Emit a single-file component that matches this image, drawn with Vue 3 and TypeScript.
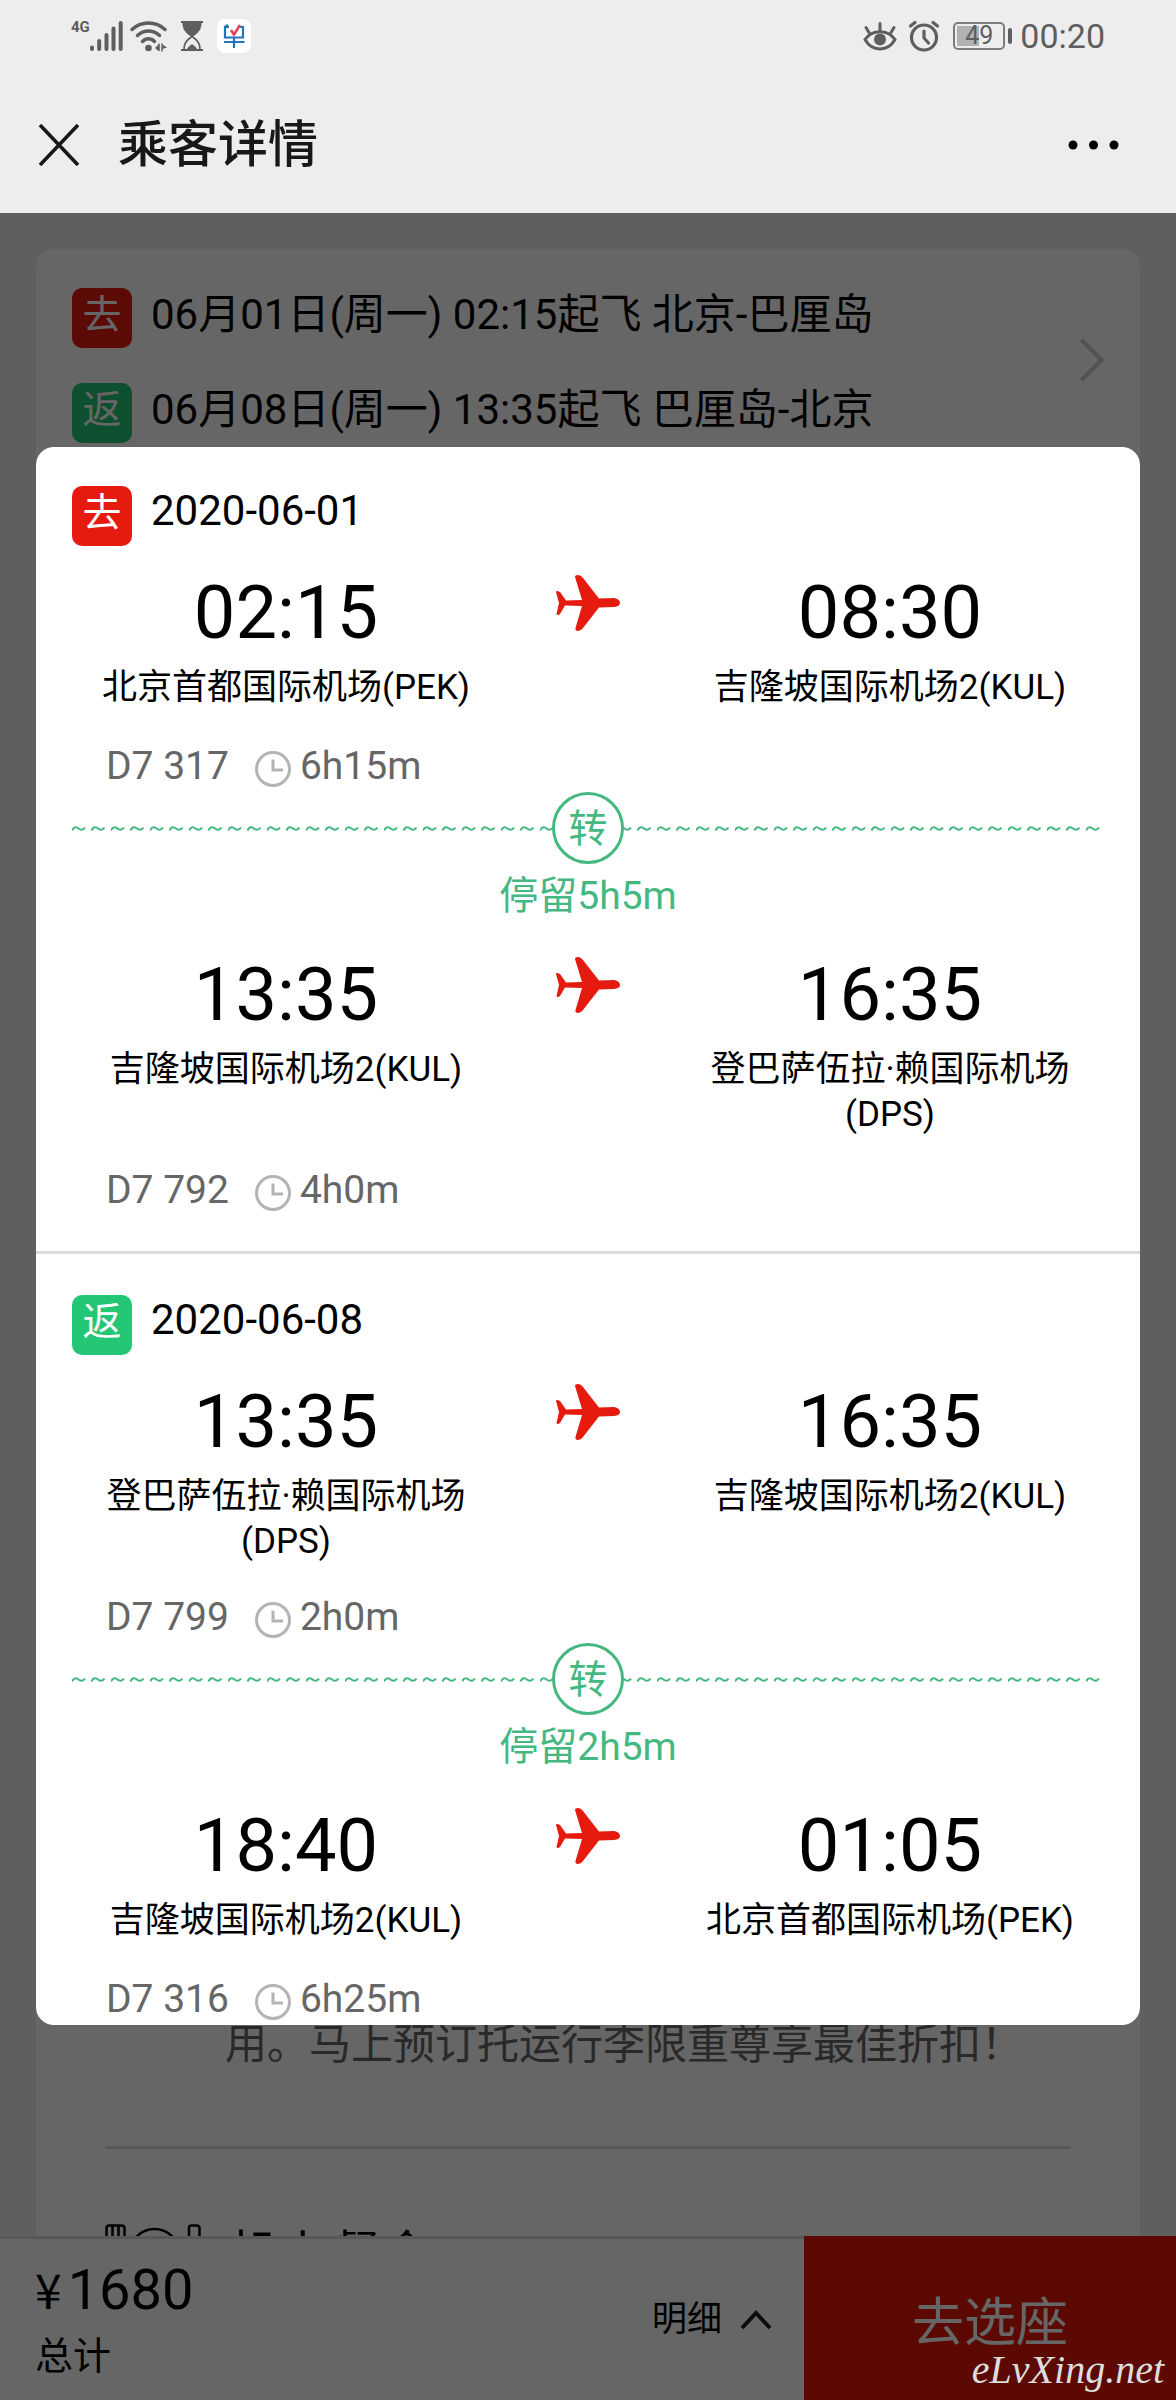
<script setup lang="ts">
interface Place {
  time: string
  airport: string
}

interface Leg {
  from: Place
  to: Place
  flight: string
  duration: string
  stopover?: string
}

interface Trip {
  kind: 'out' | 'back'
  label: string
  date: string
  summary: string
  legs: Leg[]
}

const trips: Trip[] = [
  {
    kind: 'out',
    label: '去',
    date: '2020-06-01',
    summary: '06月01日(周一) 02:15起飞 北京-巴厘岛',
    legs: [
      {
        from: { time: '02:15', airport: '北京首都国际机场(PEK)' },
        to: { time: '08:30', airport: '吉隆坡国际机场2(KUL)' },
        flight: 'D7 317',
        duration: '6h15m',
        stopover: '停留5h5m',
      },
      {
        from: { time: '13:35', airport: '吉隆坡国际机场2(KUL)' },
        to: { time: '16:35', airport: '登巴萨伍拉·赖国际机场(DPS)' },
        flight: 'D7 792',
        duration: '4h0m',
      },
    ],
  },
  {
    kind: 'back',
    label: '返',
    date: '2020-06-08',
    summary: '06月08日(周一) 13:35起飞 巴厘岛-北京',
    legs: [
      {
        from: { time: '13:35', airport: '登巴萨伍拉·赖国际机场(DPS)' },
        to: { time: '16:35', airport: '吉隆坡国际机场2(KUL)' },
        flight: 'D7 799',
        duration: '2h0m',
        stopover: '停留2h5m',
      },
      {
        from: { time: '18:40', airport: '吉隆坡国际机场2(KUL)' },
        to: { time: '01:05', airport: '北京首都国际机场(PEK)' },
        flight: 'D7 316',
        duration: '6h25m',
      },
    ],
  },
]
</script>

<template>
  <div class="app" lang="zh-CN">
    <header class="top">
      <div class="status">
        <div class="status-left">
          <span class="network">4G</span>
          <svg class="signal" width="34" height="32" viewBox="0 0 34 32" aria-hidden="true">
            <g stroke="#5e5e5e" stroke-width="4" stroke-linecap="round">
              <path d="M2 27.500V29M9.200 21V29M16.500 15V29M23.500 8.500V29M30.700 3V29" />
            </g>
          </svg>
          <svg class="wifi" width="38" height="32" viewBox="0 0 38 32" aria-hidden="true">
            <g fill="none" stroke="#5e5e5e" stroke-width="3.400" stroke-linecap="round">
              <path d="M2 9.500C11 .8 26 .8 35 9.500M7.500 15.500C14 9.500 23 9.500 29.500 15.500M12.500 21.500C16 17.800 21 17.800 24.500 21.500" />
            </g>
            <circle cx="18.500" cy="28" r="3.300" fill="#5e5e5e" />
            <path d="M29 24V31.500L25 28ZM32 23.500V31.500M32.500 24.500L37 27.500L32.500 29Z" fill="#5e5e5e" />
            <path d="M29 23.500V31M32 23.500V31.500" stroke="#5e5e5e" stroke-width="1.500" />
          </svg>
          <svg class="glass" width="24" height="32" viewBox="0 0 24 32" aria-hidden="true">
            <path d="M1 1H23V3H21.500C21.500 10 18 13 13 16.500H11C6 13 2.500 10 2.500 3H1ZM1 29H23V31H1Z" fill="#5e5e5e" />
            <path d="M4 29C4 22 8 19 12 16.500C16 19 20 22 20 29" fill="none" stroke="#5e5e5e" stroke-width="1.800" />
            <path d="M7 29C8 26.500 10 26 12 24C14 26 16 26.500 17 29Z" fill="#5e5e5e" />
          </svg>
          <svg class="badge-app" width="34" height="34" viewBox="0 0 34 34" aria-hidden="true">
            <rect width="34" height="34" rx="8" fill="#fff" />
            <path d="M12 8H8V18.500H26V8H23M8 8L11 6M7 23H27.500M17 18.500V29" fill="none" stroke="#2273b9" stroke-width="2.200" />
            <path d="M14 11L17 15.500L23 6" fill="none" stroke="#e0435c" stroke-width="2.600" />
          </svg>
        </div>
        <div class="status-right">
          <svg width="34" height="32" viewBox="0 0 34 32" aria-hidden="true">
            <g fill="none" stroke="#5e5e5e" stroke-width="3" stroke-linecap="round">
              <path d="M2 19.500C9 9 25 9 32 19.500C25 32 9 32 2 19.500ZM17 10V3.500M6 12.500L3 7.500M28 12.500L31 7.500" />
            </g>
            <circle cx="17" cy="19.500" r="6" fill="#5e5e5e" />
          </svg>
          <svg class="alarm" width="32" height="32" viewBox="0 0 32 32" aria-hidden="true">
            <g fill="none" stroke="#5e5e5e" stroke-width="3.200" stroke-linecap="round">
              <circle cx="16" cy="17.500" r="12.500" />
              <path d="M16 11V18L20.500 23M2.500 6L7 2.500M29.500 6L25 2.500" />
            </g>
          </svg>
          <span class="battery"><span class="cell">49</span></span>
          <time class="clock-text">00:20</time>
        </div>
      </div>
      <div class="nav">
        <button class="icon-btn" type="button" aria-label="关闭">
          <svg width="42" height="42" viewBox="0 0 42 42">
            <path d="M2 1L40 41M40 1L2 41" stroke="#181818" stroke-width="3.600" />
          </svg>
        </button>
        <h1>乘客详情</h1>
        <button class="icon-btn more" type="button" aria-label="更多">
          <svg width="52" height="12" viewBox="0 0 52 12">
            <circle cx="6" cy="6" r="4.500" /><circle cx="26.500" cy="6" r="4.500" /><circle cx="47" cy="6" r="4.500" />
          </svg>
        </button>
      </div>
    </header>

    <div class="stage">
      <div class="page">
        <main class="card">
          <section class="summary">
            <ul>
              <li v-for="trip in trips" :key="trip.kind">
                <span class="tag" :class="trip.kind">{{ trip.label }}</span>
                <span class="summary-text">{{ trip.summary }}</span>
              </li>
            </ul>
            <svg class="arrow" width="26" height="44" viewBox="0 0 26 44" aria-hidden="true">
              <path d="M3.500 2L23.500 22L3.500 42" fill="none" stroke="#ccc" stroke-width="4" />
            </svg>
          </section>
          <section class="extras">
            <p>用。马上预订托运行李限重尊享最佳折扣！</p>
            <hr />
            <div class="meal">
              <svg width="96" height="60" viewBox="0 0 96 60" aria-hidden="true">
                <g fill="none" stroke="#000" stroke-width="2.500">
                  <path d="M1.500 20V4Q1.500 1.500 4 1.500H16Q19.500 1.500 19.500 4V20M7.500 2V16M13.500 2V16" />
                  <circle cx="49.500" cy="30" r="25" />
                  <path d="M84 58V4Q84 1.500 86.500 1.500H91Q94.500 1.500 94.500 4V58" />
                </g>
              </svg>
              <h2>机上餐食</h2>
            </div>
          </section>
        </main>
        <footer class="bar">
          <div class="total">
            <p class="price"><span class="yen">¥</span>1680</p>
            <p class="total-label">总计</p>
          </div>
          <button class="detail" type="button">
            明细
            <svg width="32" height="20" viewBox="0 0 32 20" aria-hidden="true">
              <path d="M2 18L16 3L30 18" fill="none" stroke="#222" stroke-width="4" />
            </svg>
          </button>
          <button class="next" type="button">去选座</button>
        </footer>
      </div>

      <div class="overlay">
        <svg class="defs" width="0" height="0" aria-hidden="true">
          <defs>
            <pattern id="wave" width="39" height="8" patternUnits="userSpaceOnUse">
              <path
                d="M0 6.500C2 2 5 3 6.500 4.500S11 6.500 13 3.500M19.500 6.500C21.500 2 24.500 3 26 4.500S30.500 6.500 32.500 3.500"
                fill="none"
                stroke="#45b881"
                stroke-width="2"
              />
            </pattern>
          </defs>
        </svg>
        <div class="dialog" role="dialog" aria-modal="true" aria-label="航班详情">
          <section v-for="trip in trips" :key="trip.kind" class="trip" :class="trip.kind + '-trip'">
            <div class="trip-head">
              <span class="tag" :class="trip.kind">{{ trip.label }}</span>
              <time class="date">{{ trip.date }}</time>
            </div>
            <div v-for="leg in trip.legs" :key="leg.flight" class="leg">
              <div class="route">
                <div class="place">
                  <time class="time">{{ leg.from.time }}</time>
                  <span class="airport">{{ leg.from.airport }}</span>
                </div>
                <svg class="plane" width="64" height="56" viewBox="0 0 64 56" aria-hidden="true">
                  <path
                    d="M19 2Q19 0 22 0Q25 0 27 3L43 23.500L58 23Q64 24 64 28Q64 31.500 58 32L43 32.500L27 53Q25 56 22 56Q19 56 19.500 53L26 31L9 30.500L4 39Q1 41 .5 39L3 28L0 17Q0 15 4 17L10 25.500L26 25Z"
                    fill="#e61b10"
                  />
                </svg>
                <div class="place">
                  <time class="time">{{ leg.to.time }}</time>
                  <span class="airport">{{ leg.to.airport }}</span>
                </div>
              </div>
              <div class="flight">
                <span>{{ leg.flight }}</span>
                <svg class="clock" width="36" height="36" viewBox="0 0 36 36" aria-hidden="true">
                  <circle cx="18" cy="18" r="16.500" fill="none" stroke="#b4b4b4" stroke-width="3" />
                  <path d="M18 8.500V19H28" fill="none" stroke="#b4b4b4" stroke-width="3" />
                </svg>
                <span>{{ leg.duration }}</span>
              </div>
              <div v-if="leg.stopover" class="transfer">
                <div class="transfer-line">
                  <svg class="wave" width="100%" height="8" aria-hidden="true">
                    <rect width="100%" height="8" fill="url(#wave)" />
                  </svg>
                  <span class="ring">转</span>
                </div>
                <p class="stay">{{ leg.stopover }}</p>
              </div>
            </div>
          </section>
        </div>
      </div>

      <span class="watermark">eLvXing.net</span>
    </div>
  </div>
</template>

<style>
body {
  margin: 0;
  background: #eee;
}
</style>

<style scoped>
.app {
  display: flex;
  flex-direction: column;
  min-height: 100vh;
  font-family: Roboto, "Noto Sans CJK SC", sans-serif;
  color: #000;
}

h1,
h2,
p,
ul {
  margin: 0;
  padding: 0;
  font-weight: 400;
}

svg {
  display: block;
  flex: none;
}

button {
  padding: 0;
  border: 0;
  background: none;
  font: inherit;
  color: inherit;
}

/* Status and title bars */
.top {
  background: #ededed;
}

.status {
  display: flex;
  justify-content: space-between;
  align-items: center;
  height: 72px;
  padding: 0 71px;
  color: #5e5e5e;
}

.status-left,
.status-right {
  display: flex;
  align-items: center;
}

.network {
  align-self: flex-start;
  font-size: 15px;
  line-height: 16px;
  font-weight: 700;
}

.wifi {
  margin-left: 6px;
}

.glass {
  margin-left: 12px;
}

.badge-app {
  margin-left: 13px;
}

.alarm {
  margin-left: 11px;
}

.battery {
  display: flex;
  align-items: center;
  margin-left: 13px;
}

.battery::after {
  content: "";
  width: 4px;
  height: 16px;
  margin-left: 3px;
  border-radius: 2px;
  background: #5e5e5e;
}

.cell {
  width: 48px;
  height: 24px;
  border: 2px solid #7c7c7c;
  border-radius: 5px;
  background: linear-gradient(90deg, #b2b2b2 22px, transparent 22px) 2px 2px / 44px 20px no-repeat;
  font-size: 25px;
  line-height: 24px;
  text-align: center;
}

.clock-text {
  margin-left: 8px;
  font-size: 34px;
  line-height: 42px;
}

.nav {
  display: flex;
  align-items: center;
  height: 137px;
  padding: 4px 57px 0 38px;
}

h1 {
  flex: 1;
  margin-left: 38px;
  font-size: 50px;
  line-height: 60px;
  font-weight: 500;
  color: #181818;
}

/* Page beneath the dialog: both share one grid cell */
.stage {
  flex: 1;
  display: grid;
  grid-template-columns: minmax(0, 1fr);
}

.page,
.overlay,
.watermark {
  grid-area: 1 / 1;
}

.page {
  display: flex;
  flex-direction: column;
  padding-top: 36px;
  background: #eee;
}

.card {
  flex: 1;
  display: flex;
  flex-direction: column;
  justify-content: space-between;
  margin: 0 36px;
  border-radius: 18px 18px 0 0;
  background: #fff;
}

.summary {
  display: flex;
  justify-content: space-between;
  padding: 39px 36px;
}

.arrow {
  margin-top: 50px;
}

.summary ul {
  display: grid;
  gap: 35px;
  list-style: none;
}

.summary li,
.trip-head {
  display: flex;
  gap: 19px;
}

.summary-text {
  font-size: 42px;
  line-height: 54px;
}

.tag {
  flex: none;
  width: 60px;
  height: 60px;
  border-radius: 10px;
  font-size: 39px;
  line-height: 54px;
  text-align: center;
  color: #fff;
}

.out {
  background: #e61b10;
}

.back {
  background: #22c674;
}

.extras {
  padding: 0 69px;
}

.extras p {
  padding-left: 120px;
  font-size: 42px;
  line-height: 54px;
  color: #666;
}

hr {
  height: 3px;
  margin: 74px 0 75px;
  border: 0;
  background: #dcdcdc;
}

/* Only the top of this row shows above the price bar */
.meal {
  display: flex;
  gap: 27px;
  max-height: 12px;
  overflow: hidden;
}

h2 {
  font-size: 51px;
  line-height: 64px;
}

.bar {
  display: flex;
  align-items: stretch;
  min-height: 162px;
  background: #fff;
}

.total,
.detail {
  border-top: 3px solid #dcdcdc;
}

.total {
  flex: 1;
  padding: 16px 0 11px 35px;
}

.price {
  font-size: 56px;
  line-height: 66px;
}

.yen {
  margin-right: 6px;
  font-family: "Noto Sans CJK SC", sans-serif;
  font-size: 48px;
}

.total-label {
  font-size: 38px;
  line-height: 66px;
}

.detail {
  display: flex;
  align-items: center;
  gap: 18px;
  padding: 0 32px 0 0;
  font-size: 35px;
  line-height: 45px;
}

.next {
  width: 372px;
  background: #e5170c;
  font-size: 52px;
  color: #fff;
}

/* Dialog */
.overlay {
  padding: 234px 36px 375px;
  background: rgba(0, 0, 0, 0.6);
}

.defs {
  position: absolute;
}

.dialog {
  border-radius: 18px;
  background: #fff;
  overflow: hidden;
}

.trip {
  padding: 39px 36px 36px;
}

.back-trip {
  padding: 41px 36px 1px;
  border-top: 3px solid #dcdcdc;
}

.date {
  font-size: 42px;
  line-height: 50px;
}

.leg {
  padding-top: 23px;
}

.leg + .leg {
  padding-top: 31px;
}

.route {
  display: flex;
  justify-content: space-between;
}

.place {
  display: flex;
  flex: 1;
  flex-direction: column;
  align-items: center;
  gap: 8px;
  text-align: center;
}

.time {
  font-size: 74px;
  line-height: 88px;
}

.airport {
  min-height: 48px;
  font-size: 35px;
  line-height: 45px;
}

.plane {
  margin: 6px 56px 0;
}

.flight {
  display: flex;
  align-items: flex-end;
  margin-top: 28px;
  padding-left: 34px;
  font-size: 39px;
  line-height: 50px;
  color: #666;
}

.clock {
  margin: 0 9px 4px 26px;
}

.transfer {
  padding-top: 1px;
  color: #45b881;
  text-align: center;
}

.transfer-line {
  display: grid;
  align-items: center;
  justify-items: center;
}

.wave,
.ring {
  grid-area: 1 / 1;
}

.ring {
  width: 66px;
  height: 66px;
  border: 3px solid #45b881;
  border-radius: 50%;
  background: #fff;
  font-size: 39px;
  line-height: 68px;
}

.stay {
  margin-top: 8px;
  font-size: 39px;
  line-height: 48px;
}

.watermark {
  align-self: end;
  justify-self: end;
  margin: 0 12px 8px 0;
  font-family: "Liberation Serif", serif;
  font-size: 40px;
  line-height: 44px;
  font-style: italic;
  color: #ddd;
}
</style>
